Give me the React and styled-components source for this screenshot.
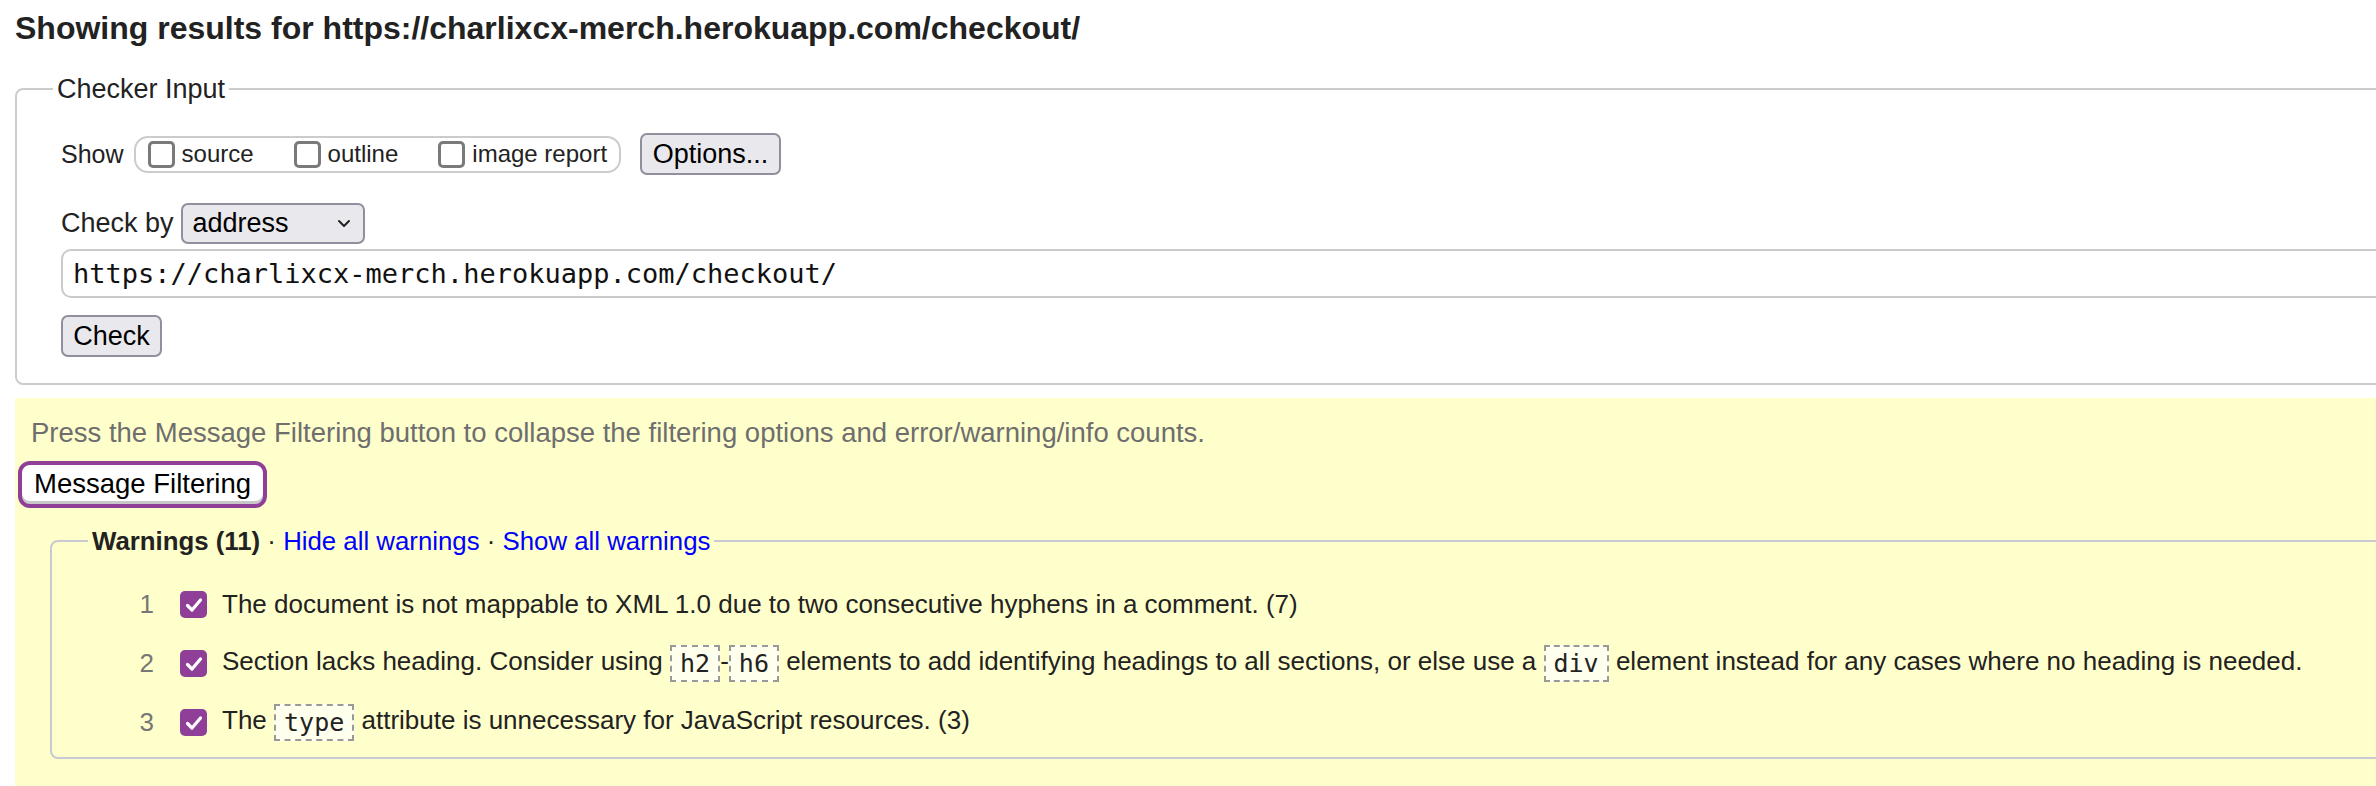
import React from 'react';
import styled, { createGlobalStyle } from 'styled-components';

//________ Data ________
const showOptions = ['source', 'outline', 'image report'];

const CheckMark = () => (
  <svg width='18' height='16' viewBox='0 0 18 16' fill='none'>
    <path d='M2.5 8.5 L7 13 L15.5 3' stroke='#fff' strokeWidth='3.2' strokeLinecap='round' strokeLinejoin='round' />
  </svg>
);

const Chevron = () => (
  <svg width='14' height='9' viewBox='0 0 14 9' fill='none'>
    <path d='M2 2 L7 7 L12 2' stroke='#222' strokeWidth='2' strokeLinecap='round' strokeLinejoin='round' />
  </svg>
);

////////////////////////////////////////////////////////////////////////////////////

const App = () => {
  return (
    <>
      <GlobalStyle />
      <Page>
        <Heading>Showing results for https://charlixcx-merch.herokuapp.com/checkout/</Heading>

        <InputFieldset>
          <Legend>Checker Input</Legend>
          <ShowRow>
            <ShowLabel>Show</ShowLabel>
            <ShowGroup>
              {showOptions.map((opt) => (
                <ShowItem key={opt}>
                  <EmptyBox />
                  <span>{opt}</span>
                </ShowItem>
              ))}
            </ShowGroup>
            <GrayButton $width={141} $ml={19}>Options...</GrayButton>
          </ShowRow>
          <ByRow>
            <span>Check by</span>
            <FakeSelect>
              <span>address</span>
              <Chevron />
            </FakeSelect>
          </ByRow>
          <UrlInput readOnly value='https://charlixcx-merch.herokuapp.com/checkout/' />
          <GrayButton $width={101} $mt={17.5}>Check</GrayButton>
        </InputFieldset>

        <Panel>
          <Note>Press the Message Filtering button to collapse the filtering options and error/warning/info counts.</Note>
          <FilterButton>Message Filtering</FilterButton>

          <WarnFieldset>
            <WarnLegend>
              <b>Warnings (11)</b> · <Link href='#'>Hide all warnings</Link> · <Link href='#'>Show all warnings</Link>
            </WarnLegend>
            <List>
              <Row>
                <Num>1</Num>
                <Checked><CheckMark /></Checked>
                <Msg>The document is not mappable to XML 1.0 due to two consecutive hyphens in a comment. (7)</Msg>
              </Row>
              <Row>
                <Num>2</Num>
                <Checked><CheckMark /></Checked>
                <Msg>
                  Section lacks heading. Consider using <Code>h2</Code>-<Code>h6</Code> elements to add identifying
                  headings to all sections, or else use a <Code>div</Code> element instead for any cases where no
                  heading is needed.
                </Msg>
              </Row>
              <Row>
                <Num>3</Num>
                <Checked><CheckMark /></Checked>
                <Msg>
                  The <Code>type</Code> attribute is unnecessary for JavaScript resources. (3)
                </Msg>
              </Row>
            </List>
          </WarnFieldset>
        </Panel>
      </Page>
    </>
  );
};

/////////////////////////// styled components /////////////////////////////////////

const GlobalStyle = createGlobalStyle`
  html, body {
    margin: 0;
    padding: 0;
    background: #fff;
    overflow: hidden;
  }
  body {
    font-family: "Liberation Sans", Arial, sans-serif;
    color: #222;
  }
`;

const Page = styled.div`
  width: 2600px;
  padding-left: 15px;
`;

const Heading = styled.h2`
  margin: 0;
  padding-top: 9px;
  font-size: 32px;
  line-height: 38px;
  font-weight: 700;
  color: #222;
`;

const InputFieldset = styled.fieldset`
  margin: 26.5px 0 0;
  padding: 0 0 25.5px 44px;
  border: 2px solid #ccc;
  border-radius: 8px;
  font-size: 27px;
`;

const Legend = styled.legend`
  margin-left: -8px;
  padding: 0 4px;
  font-size: 27px;
  line-height: 31px;
`;

const ShowRow = styled.div`
  display: flex;
  align-items: center;
  height: 42px;
  margin-top: 28.5px;
`;

const ShowLabel = styled.span`
  font-size: 25px;
`;

const ShowGroup = styled.div`
  display: flex;
  align-items: center;
  gap: 40px;
  height: 37px;
  box-sizing: border-box;
  margin-left: 10px;
  padding: 0 12px;
  border: 2px solid #ccc;
  border-radius: 14px;
`;

const ShowItem = styled.label`
  display: flex;
  align-items: center;
  gap: 7px;
  font-size: 24px;
`;

const EmptyBox = styled.span`
  width: 27px;
  height: 27px;
  box-sizing: border-box;
  border: 3px solid #7a7a7a;
  border-radius: 5px;
  background: #fff;
`;

const GrayButton = styled.button`
  display: block;
  width: ${(p) => p.$width}px;
  height: 42px;
  margin: ${(p) => p.$mt || 0}px 0 0 ${(p) => p.$ml || 0}px;
  padding: 0;
  box-sizing: border-box;
  background: #e9e9ed;
  border: 2px solid #8f8f9d;
  border-radius: 7px;
  font-family: "Liberation Sans", Arial, sans-serif;
  font-size: 27px;
  color: #000;
`;

const ByRow = styled.div`
  display: flex;
  align-items: center;
  gap: 7px;
  margin-top: 28px;
  height: 41px;
`;

const FakeSelect = styled.div`
  display: flex;
  align-items: center;
  justify-content: space-between;
  width: 184px;
  height: 41px;
  box-sizing: border-box;
  padding: 0 12px 0 10px;
  background: #e9e9ed;
  border: 2px solid #8f8f9d;
  border-radius: 7px;
  color: #000;
`;

const UrlInput = styled.input`
  display: block;
  width: 2500px;
  height: 49px;
  box-sizing: border-box;
  margin-top: 4.5px;
  padding: 0 10px;
  border: 2px solid #cacaca;
  border-radius: 10px;
  background: #fff;
  font-family: "DejaVu Sans Mono", "Liberation Mono", monospace;
  font-size: 27px;
  color: #111;
  outline: none;
`;

const Panel = styled.div`
  margin-top: 13px;
  padding: 19.5px 0 40px 3px;
  background: #ffc;
`;

const Note = styled.p`
  margin: 0 0 0 13px;
  font-size: 27.5px;
  line-height: 31px;
  color: #6e6e6e;
`;

const FilterButton = styled.button`
  display: block;
  height: 47px;
  margin-top: 12.5px;
  padding: 0 12px;
  box-sizing: border-box;
  background: #fff;
  border: 4px solid #8f3f97;
  border-radius: 12px;
  box-shadow: inset 0 -3px 0 #c8c8c8;
  font-family: "Liberation Sans", Arial, sans-serif;
  font-size: 27.5px;
  color: #000;
`;

const WarnFieldset = styled.fieldset`
  margin: 18.5px 0 0 32px;
  padding: 0 0 5px;
  border: 2px solid #c9c9d1;
  border-radius: 8px;
`;

const WarnLegend = styled.legend`
  margin-left: 36px;
  padding: 0 4px;
  font-size: 25.8px;
  line-height: 30px;
  color: #222;
`;

const Link = styled.a`
  color: #00f;
  text-decoration: none;
`;

const List = styled.ol`
  margin: 0;
  padding: 19px 0 0;
  list-style: none;
`;

const Row = styled.li`
  display: flex;
  align-items: center;
  height: 59px;
  font-size: 26px;
`;

const Num = styled.span`
  width: 102px;
  text-align: right;
  color: #777;
`;

const Checked = styled.span`
  display: flex;
  align-items: center;
  justify-content: center;
  width: 27px;
  height: 27px;
  margin-left: 26px;
  border-radius: 5px;
  background: #8f3f97;
`;

const Msg = styled.span`
  margin-left: 15px;
  white-space: nowrap;
  color: #222;
`;

const Code = styled.code`
  display: inline-block;
  padding: 2px 8px;
  line-height: 29px;
  border: 2px dashed #999;
  background: #ffffee;
  font-family: "DejaVu Sans Mono", "Liberation Mono", monospace;
  font-size: 25px;
  color: #222;
  vertical-align: middle;
`;

export default App;
